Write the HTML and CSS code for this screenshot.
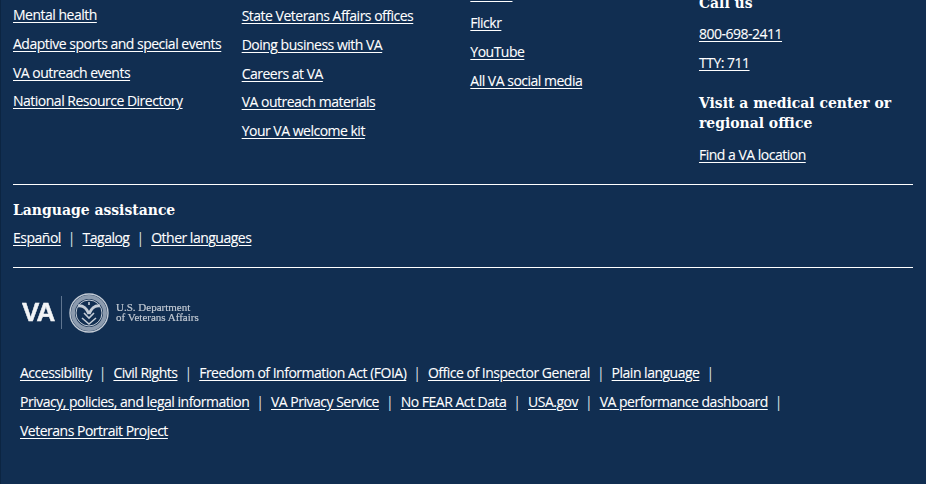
FILE: index.html
```html
<!DOCTYPE html>
<html lang="en">
<head>
<meta charset="utf-8">
<title>VA footer</title>
<link rel="stylesheet" href="styles.css">
</head>
<body>
<footer class="footer">
  <div class="columns">
    <ul class="col col-one">
      <li><a href="#">Mental health</a></li>
      <li><a href="#">Adaptive sports and special events</a></li>
      <li><a href="#">VA outreach events</a></li>
      <li><a href="#">National Resource Directory</a></li>
    </ul>
    <ul class="col col-two">
      <li><a href="#">State Veterans Affairs offices</a></li>
      <li><a href="#">Doing business with VA</a></li>
      <li><a href="#">Careers at VA</a></li>
      <li><a href="#">VA outreach materials</a></li>
      <li><a href="#">Your VA welcome kit</a></li>
    </ul>
    <ul class="col col-three">
      <li><a href="#">Twitter</a></li>
      <li><a href="#">Flickr</a></li>
      <li><a href="#">YouTube</a></li>
      <li><a href="#">All VA social media</a></li>
    </ul>
    <div class="col col-four">
      <h3 class="heading">Call us</h3>
      <ul class="plain">
        <li><a href="#">800-698-2411</a></li>
        <li><a href="#">TTY: 711</a></li>
      </ul>
      <h3 class="heading visit">Visit a medical center or regional office</h3>
      <a href="#" class="find">Find a VA location</a>
    </div>
  </div>
  <hr class="rule">
  <section class="language">
    <h3 class="heading">Language assistance</h3>
    <p class="lang-links"><a href="#">Español</a><span class="sep">|</span><a href="#">Tagalog</a><span class="sep">|</span><a href="#">Other languages</a></p>
  </section>
  <hr class="rule">
  <div class="logo">
    <svg width="180" height="42" viewBox="0 0 180 42" role="img" aria-label="U.S. Department of Veterans Affairs">
      <text x="0" y="28" class="logo-va">VA</text>
      <rect x="39" y="3" width="1" height="33" fill="#5f7590"/>
      <g fill="none" stroke="#c4ccd6">
        <circle cx="67" cy="20" r="19" stroke-width="1.4"/>
        <circle cx="67" cy="20" r="16" stroke-width="4" stroke="#8c9bae"/>
        <circle cx="67" cy="20" r="13" stroke-width="1"/>
        <path d="M56 13c5-1 9 3 11 8M78 13c-5-1-9 3-11 8" stroke-width="3"/>
        <path d="M67 9v3M60 25l7 6 7-6M62 20l5 5 5-5" stroke-width="1.6"/>
      </g>
      <text x="94" y="18" class="logo-text">U.S. Department</text>
      <text x="94" y="28" class="logo-text">of Veterans Affairs</text>
    </svg>
  </div>
  <ul class="bottom">
    <li><a href="#">Accessibility</a></li>
    <li><a href="#">Civil Rights</a></li>
    <li><a href="#">Freedom of Information Act (FOIA)</a></li>
    <li><a href="#">Office of Inspector General</a></li>
    <li><a href="#">Plain language</a></li>
    <li><a href="#">Privacy, policies, and legal information</a></li>
    <li><a href="#">VA Privacy Service</a></li>
    <li><a href="#">No FEAR Act Data</a></li>
    <li><a href="#">USA.gov</a></li>
    <li><a href="#">VA performance dashboard</a></li>
    <li class="last"><a href="#">Veterans Portrait Project</a></li>
  </ul>
</footer>
</body>
</html>
```
FILE: styles.css
```css
html, body {
  margin: 0;
  padding: 0;
  background: #112e51;
}
.footer {
  box-sizing: border-box;
  width: 926px;
  height: 484px;
  overflow: hidden;
  padding: 0 13px 0 12px;
  border-left: 1px solid #0c2542;
  background: #112e51;
  color: #fff;
  font-family: "Open Sans", "Noto Sans", sans-serif;
  font-size: 14px;
  line-height: 20px;
}
a {
  color: #fff;
  text-decoration: underline;
  text-underline-offset: 2px;
  letter-spacing: -0.5px;
  -webkit-text-stroke: 0.1px #fff;
}
ul {
  list-style: none;
  margin: 0;
  padding: 0;
}
.columns {
  display: grid;
  grid-template-columns: repeat(4, 228.67px);
  height: 184px;
}
.col li {
  margin-bottom: 8.8px;
}
.col-one { padding-top: 5px; }
.col-two { padding-top: 6px; }
.col-three { margin-top: -15.6px; }
.col-four { margin-top: -7px; }
.plain li { margin-bottom: 8.8px; }
.heading {
  margin: 0;
  font-family: "DejaVu Serif Condensed", "DejaVu Serif", serif;
  font-weight: 700;
  font-size: 15.5px;
  line-height: 20px;
}
.col-four .heading { margin-bottom: 11px; }
.col-four .visit { margin-top: 20px; margin-bottom: 12px; }
.rule {
  margin: 0;
  border: 0;
  height: 1px;
  background: #fff;
}
.language { height: 82px; padding-top: 15px; box-sizing: border-box; }
.lang-links { margin: 8px 0 0; }
.sep { margin: 0 7px; color: #dfe3e8; }
.logo {
  padding: 25px 0 0 9px;
  height: 46px;
}
.logo svg { display: block; filter: blur(0.5px); }
.logo-va {
  font-family: "Liberation Sans", sans-serif;
  font-weight: 700;
  font-size: 26px;
  fill: #f2f4f6;
  stroke: #f2f4f6;
  stroke-width: 0.5px;
  letter-spacing: -1px;
}
.logo-text {
  font-family: "Liberation Serif", serif;
  font-size: 11px;
  fill: #c0c8d2;
  stroke: #c0c8d2;
  stroke-width: 0.2px;
}
.bottom {
  display: flex;
  flex-wrap: wrap;
  padding: 24px 0 0 7px;
  width: 860px;
  row-gap: 9px;
}
.bottom li::after {
  content: "|";
  margin: 0 7px;
  color: #dfe3e8;
}
.bottom li.last::after { content: none; }
```
